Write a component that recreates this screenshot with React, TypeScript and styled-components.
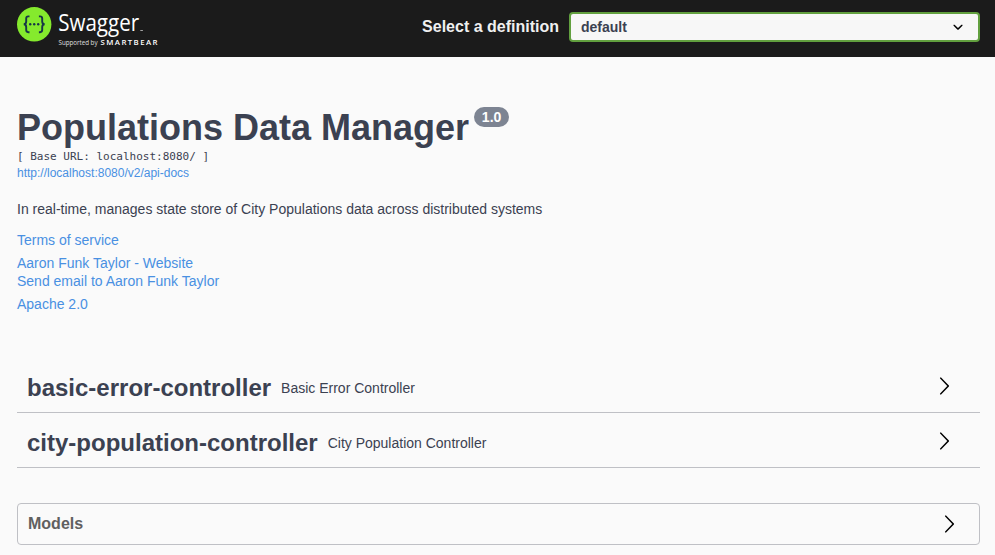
import React from "react";
import styled, { createGlobalStyle } from "styled-components";

const GlobalStyle = createGlobalStyle`
  * { box-sizing: border-box; }
  body {
    margin: 0;
    background: #fafafa;
    color: #3b4151;
    font-family: "Liberation Sans", Arial, sans-serif;
  }
`;

const Page = styled.div`
  min-height: 555px;
  overflow: hidden;
`;

const Topbar = styled.header`
  display: flex;
  justify-content: space-between;
  height: 57px;
  padding: 0 15px 0 17px;
  background: #1b1b1b;
`;

const DefinitionPicker = styled.label`
  display: flex;
  align-items: center;
  height: 30px;
  margin-top: 12px;
  color: #f0f0f0;
  font-size: 16px;
  font-weight: 700;
`;

const SelectBox = styled.div`
  display: flex;
  align-items: center;
  justify-content: space-between;
  width: 411px;
  height: 30px;
  margin-left: 10px;
  padding: 0 10px;
  border: 2px solid #62a03f;
  border-radius: 4px;
  background: #f7f7f7;
  color: #3b4151;
  font-size: 14px;
`;

const Info = styled.section`
  padding: 50px 17px 0;
`;

const Title = styled.h1`
  display: flex;
  align-items: flex-start;
  height: 42px;
  margin: 0;
  font-size: 36px;
  line-height: 42px;
`;

const Version = styled.span`
  width: 35px;
  height: 20px;
  margin-left: 5px;
  border-radius: 10px;
  background: #7d8492;
  color: #fff;
  font-size: 14px;
  line-height: 20px;
  text-align: center;
`;

const BaseUrl = styled.pre`
  margin: 0;
  font: 11px/15px "DejaVu Sans Mono", monospace;
`;

const Link = styled.a<{ $small?: boolean; $gap?: number }>`
  display: block;
  width: max-content;
  margin-top: ${({ $gap = 0 }) => $gap}px;
  color: #4990e2;
  font-size: ${({ $small }) => ($small ? 12 : 14)}px;
  line-height: 18px;
  text-decoration: none;
`;

const Description = styled.p`
  margin: 18px 0 13px;
  font-size: 14px;
  line-height: 18px;
`;

const Tags = styled.main`
  padding: 50px 15px 0 17px;
`;

const TagRow = styled.div`
  display: flex;
  align-items: center;
  height: 50px;
  margin-bottom: 5px;
  padding: 0 26px 0 10px;
  border-bottom: 1px solid #bfc0c5;

  svg {
    margin-bottom: 4px;
  }
`;

const TagName = styled.h3`
  margin: 0;
  font-size: 24px;
  line-height: 28px;
`;

const TagSummary = styled.small`
  flex: 1;
  padding-left: 10px;
  font-size: 14px;
`;

const Models = styled.section`
  display: flex;
  align-items: center;
  justify-content: space-between;
  height: 42px;
  margin-top: 35px;
  padding: 0 20px 0 10px;
  border: 1px solid #bfc0c5;
  border-radius: 4px;
  color: #606060;
  font-size: 16px;
  font-weight: 700;
`;

const Logo = () => (
  <svg width="150" height="57" viewBox="17 0 150 57" aria-label="Swagger">
    <circle cx="34.2" cy="24.3" r="17.2" fill="#85ea2d" />
    <g fill="none" stroke="#173647" strokeWidth="1.9">
      <path d="M29.5 16.4h-1.2q-2.1 0-2.1 2.1v3q0 2.6-2.4 2.8q2.4.2 2.4 2.8v3q0 2.1 2.1 2.1h1.2" />
      <path d="M38.9 16.4h1.2q2.1 0 2.1 2.1v3q0 2.6 2.4 2.8q-2.4.2-2.4 2.8v3q0 2.1-2.1 2.1h-1.2" />
    </g>
    <g fill="#173647">
      <circle cx="30.2" cy="24.3" r="1.2" />
      <circle cx="34.2" cy="24.3" r="1.2" />
      <circle cx="38.2" cy="24.3" r="1.2" />
    </g>
    <g fill="#fff" fontFamily="'Open Sans', sans-serif">
      <text x="58.2" y="31.4" fontSize="22.8" textLength="81" lengthAdjust="spacingAndGlyphs">Swagger</text>
      <rect x="140.3" y="30" width="2.6" height="1" opacity="0.6" />
      <text x="58.5" y="45.2" fontSize="6.3" opacity="0.85" textLength="39" lengthAdjust="spacingAndGlyphs">Supported by</text>
      <text x="100.5" y="45.3" fontSize="7.8" fontWeight="600" textLength="57" lengthAdjust="spacing">SMARTBEAR</text>
    </g>
  </svg>
);

const Chevron = () => (
  <svg width="20" height="20" viewBox="0 0 20 20">
    <path d="M13.25 10L6.109 2.58c-.268-.27-.268-.707 0-.979.268-.27.701-.27.969 0l7.83 7.908c.268.271.268.709 0 .979l-7.83 7.908c-.268.271-.701.27-.969 0-.268-.269-.268-.707 0-.979L13.25 10z" />
  </svg>
);

const SelectArrow = () => (
  <svg width="20" height="20" viewBox="0 0 20 20">
    <path d="M13.418 7.859c.271-.268.709-.268.978 0 .27.268.272.701 0 .969l-3.908 3.83c-.27.268-.707.268-.979 0l-3.908-3.83c-.27-.267-.27-.701 0-.969.271-.268.709-.268.978 0L10 11l3.418-3.141z" />
  </svg>
);

const tags = [
  { name: "basic-error-controller", summary: "Basic Error Controller" },
  { name: "city-population-controller", summary: "City Population Controller" },
];

export default function App() {
  return (
    <Page>
      <GlobalStyle />
      <Topbar>
        <Logo />
        <DefinitionPicker>
          Select a definition
          <SelectBox>
            default
            <SelectArrow />
          </SelectBox>
        </DefinitionPicker>
      </Topbar>
      <Info>
        <Title>
          Populations Data Manager
          <Version>1.0</Version>
        </Title>
        <BaseUrl>[ Base URL: localhost:8080/ ]</BaseUrl>
        <Link $small>http://localhost:8080/v2/api-docs</Link>
        <Description>
          In real-time, manages state store of City Populations data across distributed systems
        </Description>
        <Link>Terms of service</Link>
        <Link $gap={5}>Aaron Funk Taylor - Website</Link>
        <Link>Send email to Aaron Funk Taylor</Link>
        <Link $gap={5}>Apache 2.0</Link>
      </Info>
      <Tags>
        {tags.map((tag) => (
          <TagRow key={tag.name}>
            <TagName>{tag.name}</TagName>
            <TagSummary>{tag.summary}</TagSummary>
            <Chevron />
          </TagRow>
        ))}
        <Models>
          Models
          <Chevron />
        </Models>
      </Tags>
    </Page>
  );
}
